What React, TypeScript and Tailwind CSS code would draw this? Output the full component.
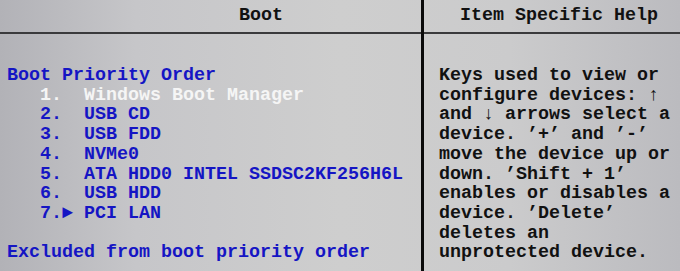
import React from "react";

const items = [
  { n: "1.", name: "Windows Boot Manager", active: true },
  { n: "2.", name: "USB CD" },
  { n: "3.", name: "USB FDD" },
  { n: "4.", name: "NVMe0" },
  { n: "5.", name: "ATA HDD0 INTEL SSDSC2KF256H6L" },
  { n: "6.", name: "USB HDD" },
  { n: "7.", name: "PCI LAN", arrow: true },
];

const help = [
  "Keys used to view or",
  "configure devices: ↑",
  "and ↓ arrows select a",
  "device. ’+’ and ’-’",
  "move the device up or",
  "down. ’Shift + 1’",
  "enables or disables a",
  "device. ’Delete’",
  "deletes an",
  "unprotected device.",
];

const App = () => {
  return (
    <div
      className="w-[680px] h-[271px] overflow-hidden flex bg-[linear-gradient(90deg,#b2b2b7_0%,#c6c6c9_20%,#cecece_50%,#cbcbcc_75%,#bbbbbf_100%)] font-bold text-[18.33px] leading-[19.7px] whitespace-pre"
      style={{ fontFamily: '"Liberation Mono", "DejaVu Sans Mono", monospace' }}
    >
      {/* left: boot order */}
      <div className="w-[424px] shrink-0 border-r-[3px] border-[#0a0a0a] flex flex-col">
        <div className="h-[34px] shrink-0 border-b-2 border-[#3a3a3c] pl-[239px] pt-[6px] text-[#111]">
          Boot
        </div>
        <div className="pt-[32px] pl-[7px] text-[#1515c4]">
          <div>Boot Priority Order</div>
          {items.map((it) => (
            <div key={it.n} className={it.active ? "text-[#f5f5f5]" : ""}>
              {"   " + it.n}
              {it.arrow ? "► " : "  "}
              {it.name}
            </div>
          ))}
          <div> </div>
          <div>Excluded from boot priority order</div>
        </div>
      </div>

      {/* right: help */}
      <div className="flex-1 flex flex-col">
        <div className="h-[34px] shrink-0 border-b-2 border-[#3a3a3c] pl-[36px] pt-[6px] text-[#111]">
          Item Specific Help
        </div>
        <div className="pt-[32px] pl-[15px] text-[#111]">
          {help.map((l, i) => (
            <div key={i}>{l}</div>
          ))}
        </div>
      </div>
    </div>
  );
};

export default App;
